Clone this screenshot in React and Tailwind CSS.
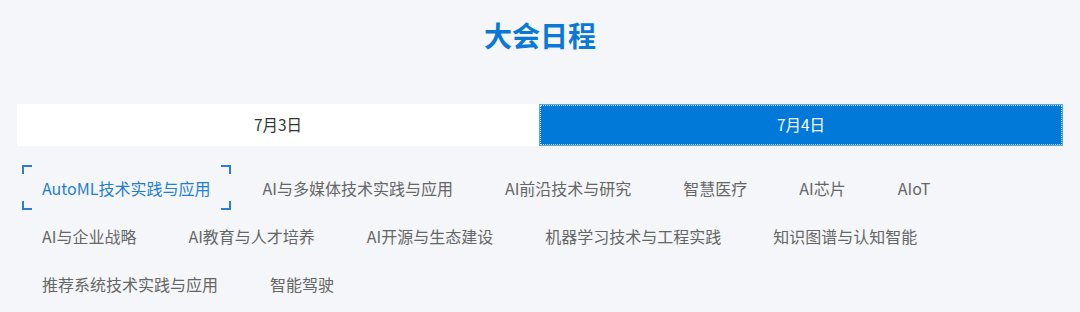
import React, { useState } from "react";

const days = ["7月3日", "7月4日"];

const topics = [
  "AutoML技术实践与应用",
  "AI与多媒体技术实践与应用",
  "AI前沿技术与研究",
  "智慧医疗",
  "AI芯片",
  "AIoT",
  "AI与企业战略",
  "AI教育与人才培养",
  "AI开源与生态建设",
  "机器学习技术与工程实践",
  "知识图谱与认知智能",
  "推荐系统技术实践与应用",
  "智能驾驶",
];

const Corner = ({ pos }) => (
  <span className={`absolute w-[10px] h-[9px] border-[#2c7fd0] ${pos}`} />
);

const App = () => {
  const [day, setDay] = useState(1);
  const [topic, setTopic] = useState(0);

  return (
    <div
      className="min-h-[312px] w-[1080px] bg-[#f4f6f9] px-[17px]"
      style={{ fontFamily: '"Microsoft YaHei", "Noto Sans CJK SC", "Noto Sans", sans-serif' }}
    >
      {/* Title */}
      <div className="h-[70px] flex items-center justify-center">
        <h1 className="text-[28px] font-bold text-[#0a78d7] leading-none">大会日程</h1>
      </div>

      {/* Day tabs */}
      <div className="mt-[34px] flex h-[42px]">
        {days.map((d, i) => (
          <button
            key={d}
            onClick={() => setDay(i)}
            className={`flex-1 flex items-center justify-center text-[15.5px] ${
              day === i
                ? "bg-[#0079d8] text-white border border-[#5aa5e6] outline-1 outline-dotted outline-white/80 -outline-offset-2"
                : "bg-white text-[#333]"
            }`}
          >
            {d}
          </button>
        ))}
      </div>

      {/* Topics */}
      <div className="mt-[19px] pl-[5px] flex flex-wrap gap-x-[12px] gap-y-[3px]">
        {topics.map((t, i) => (
          <button
            key={t}
            onClick={() => setTopic(i)}
            className={`relative h-[45px] px-[20px] flex items-center text-[16px] whitespace-nowrap ${
              topic === i ? "text-[#1f7fd4]" : "text-[#666]"
            }`}
          >
            {topic === i && (
              <>
                <Corner pos="left-0 top-0 border-l-2 border-t-2" />
                <Corner pos="right-0 top-0 border-r-2 border-t-2" />
                <Corner pos="left-0 bottom-0 border-l-2 border-b-2" />
                <Corner pos="right-0 bottom-0 border-r-2 border-b-2" />
              </>
            )}
            {t}
          </button>
        ))}
      </div>
    </div>
  );
};

export default App;
